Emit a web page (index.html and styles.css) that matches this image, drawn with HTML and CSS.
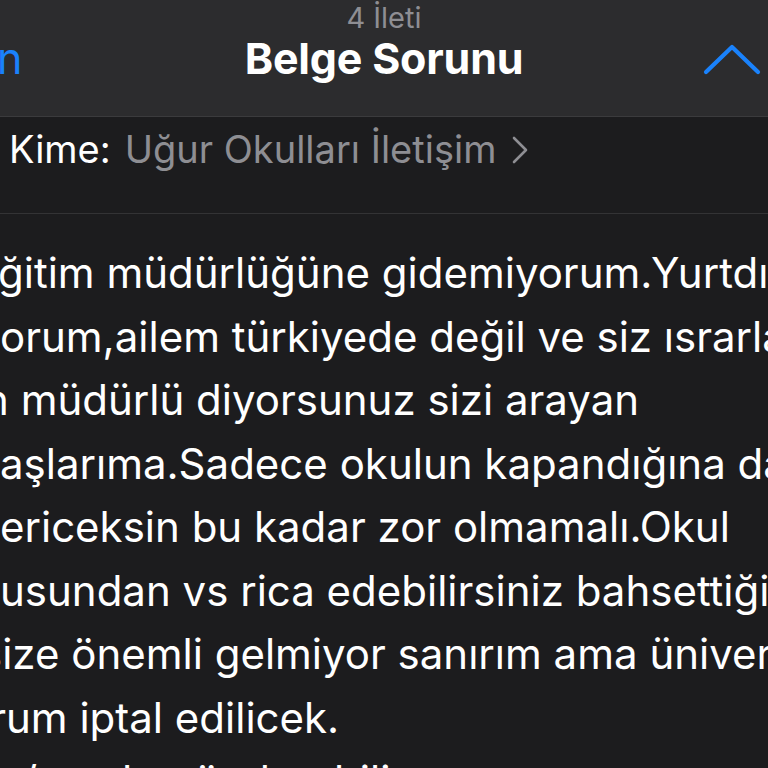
FILE: index.html
```html
<!DOCTYPE html>
<html lang="tr">
<head>
<meta charset="utf-8">
<link rel="stylesheet" href="styles.css">
</head>
<body>
<div class="screen">
  <header class="nav">
    <div class="nav-back">n</div>
    <div class="nav-title">
      <div class="nav-count">4 İleti</div>
      <div class="nav-subject">Belge Sorunu</div>
    </div>
    <div class="nav-up">
      <svg width="58" height="32" viewBox="0 0 58 32"><path d="M3 29 L29 4 L55 29" fill="none" stroke="#1a82fb" stroke-width="4.2" stroke-linecap="round" stroke-linejoin="round"/></svg>
    </div>
  </header>
  <div class="recipient">
    <span class="recipient-label">Kime:</span>
    <span class="recipient-name">Uğur Okulları İletişim</span>
    <svg class="recipient-chev" width="16" height="28" viewBox="0 0 16 28"><path d="M2 2 L14 14 L2 26" fill="none" stroke="#8e8e93" stroke-width="2.6" stroke-linecap="round" stroke-linejoin="round"/></svg>
  </div>
  <div class="mail-body">
    <div class="line l1">ğitim müdürlüğüne gidemiyorum.Yurtdışındayım</div>
    <div class="line l2">orum,ailem türkiyede değil ve siz ısrarla</div>
    <div class="line l3">n müdürlü diyorsunuz sizi arayan</div>
    <div class="line l4">aşlarıma.Sadece okulun kapandığına dair</div>
    <div class="line l5">ericeksin bu kadar zor olmamalı.Okul</div>
    <div class="line l6">usundan vs rica edebilirsiniz bahsettiğiniz</div>
    <div class="line l7">size önemli gelmiyor sanırım ama üniversite</div>
    <div class="line l8">orum iptal edilicek.</div>
    <div class="line l9">/ vs de gönderebilir</div>
  </div>
</div>
</body>
</html>
```
FILE: styles.css
```css
* { box-sizing: border-box; }
html, body { margin: 0; padding: 0; background: #1c1c1e; }
body { font-family: Inter, "Noto Sans", sans-serif; color: #fff; }
.screen { width: 768px; height: 768px; overflow: hidden; background: #1c1c1e; }

.nav {
  height: 117px;
  background: #2c2c2e;
  border-bottom: 1px solid #3b3b3d;
  display: grid;
  grid-template-columns: 1fr auto 1fr;
  align-items: start;
}
.nav-back {
  color: #1a82fb;
  font-size: 43px;
  line-height: 44px;
  padding-top: 36px;
  margin-left: -3px;
}
.nav-title { text-align: center; }
.nav-count {
  color: #8e8e93;
  font-size: 29px;
  line-height: 30px;
  padding-top: 3px;
}
.nav-subject {
  font-size: 43px;
  font-weight: 700;
  line-height: 44px;
  margin-top: 3px;
  letter-spacing: -0.2px;
}
.nav-up {
  justify-self: end;
  padding-top: 43px;
  padding-right: 7px;
}

.recipient {
  height: 97px;
  border-bottom: 1px solid #333335;
  display: flex;
  align-items: flex-start;
  padding: 12px 0 0 9px;
  font-size: 38px;
  line-height: 40px;
}
.recipient-label { color: #fff; margin-right: 14px; }
.recipient-name { color: #8e8e93; }
.recipient-chev { margin-left: 16px; margin-top: 7px; }

.mail-body {
  padding-top: 27px;
  font-size: 42px;
  line-height: 63.5px;
  white-space: nowrap;
}
.line { color: #fff; }
.l1 { text-indent: -2px; }
.l2 { text-indent: 0px; }
.l3 { text-indent: -16px; }
.l4 { text-indent: 0px; }
.l5 { text-indent: 0px; }
.l6 { text-indent: 0px; }
.l7 { text-indent: -20px; }
.l8 { text-indent: -35px; }
.l9 { text-indent: 22px; }
```
